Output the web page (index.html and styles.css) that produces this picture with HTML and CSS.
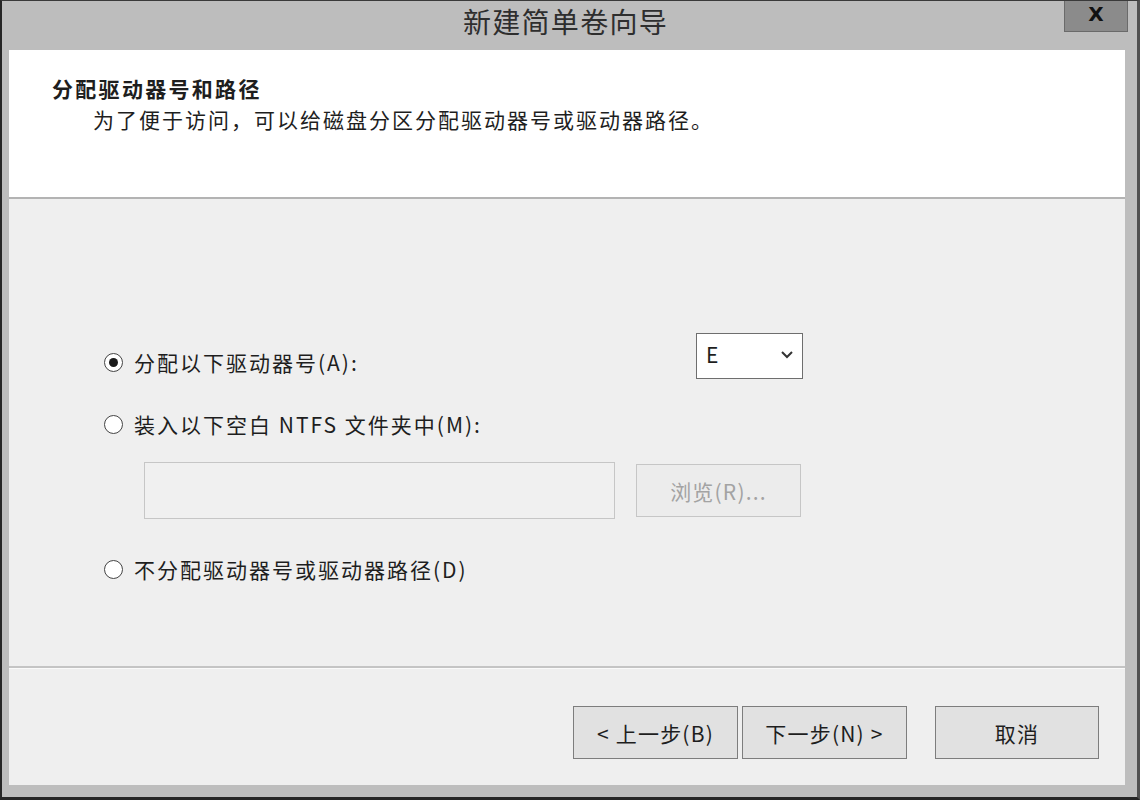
FILE: index.html
```html
<!DOCTYPE html>
<html lang="zh-CN">
<head>
<meta charset="utf-8">
<title>新建简单卷向导</title>
<link rel="stylesheet" href="styles.css">
</head>
<body>
<div class="window">
  <div class="titlebar">
    <div class="tb-spacer"></div>
    <div class="tb-title">新建简单卷向导</div>
    <div class="tb-right"><div class="close">X</div></div>
  </div>
  <div class="client">
    <div class="header">
      <div class="h-title">分配驱动器号和路径</div>
      <div class="h-sub">为了便于访问，可以给磁盘分区分配驱动器号或驱动器路径。</div>
    </div>
    <div class="body">
      <div class="row row1">
        <label class="radio"><span class="circle checked"></span><span class="lbl">分配以下驱动器号(A):</span></label>
        <div class="select"><span>E</span>
          <svg width="14" height="10" viewBox="0 0 14 10"><path d="M2 2 L7 7 L12 2" fill="none" stroke="#333" stroke-width="2"/></svg>
        </div>
      </div>
      <div class="row row2">
        <label class="radio"><span class="circle"></span><span class="lbl">装入以下空白 NTFS 文件夹中(M):</span></label>
      </div>
      <div class="row row-path">
        <div class="path-input"></div>
        <div class="btn disabled browse">浏览(R)...</div>
      </div>
      <div class="row row3">
        <label class="radio"><span class="circle"></span><span class="lbl">不分配驱动器号或驱动器路径(D)</span></label>
      </div>
    </div>
    <div class="footer">
      <div class="btn nav">&lt; 上一步(B)</div>
      <div class="btn nav">下一步(N) &gt;</div>
      <div class="btn nav cancel">取消</div>
    </div>
  </div>
</div>
</body>
</html>
```

FILE: styles.css
```css
html, body {
  margin: 0;
  padding: 0;
}
body {
  font-family: "Noto Sans CJK SC", "Noto Sans", sans-serif;
  color: #1e1e1e;
  background: #1a1a1a;
}
.window {
  width: 1140px;
  height: 800px;
  box-sizing: border-box;
  background: #bdbdbd;
  border-left: 2px solid #262626;
  border-top: 1px solid #3a3a3a;
  border-right: 3px solid #505050;
  border-bottom: 3px solid #262626;
  display: flex;
  flex-direction: column;
}
.titlebar {
  height: 48px;
  display: grid;
  grid-template-columns: 1fr auto 1fr;
  align-items: start;
  padding-right: 8px;
}
.tb-title {
  font-size: 28px;
  line-height: 40px;
  color: #2e2e2e;
  letter-spacing: 1.3px;
}
.tb-right {
  display: flex;
  justify-content: flex-end;
  padding-right: 1px;
}
.close {
  width: 64px;
  height: 31px;
  box-sizing: border-box;
  background: #8b8b8b;
  border: 1px solid #6a6a6a;
  border-top: none;
  color: #111;
  font-family: "DejaVu Sans", sans-serif;
  font-weight: bold;
  font-size: 20px;
  line-height: 26px;
  text-align: center;
}
.client {
  flex: 1;
  margin: 1px 12px 12px 7px;
  display: flex;
  flex-direction: column;
  background: #efefef;
}
.header {
  height: 149px;
  box-sizing: border-box;
  background: #fff;
  border-bottom: 2px solid #b3b3b3;
  padding: 24px 0 0 43px;
}
.h-title {
  font-size: 21px;
  font-weight: bold;
  line-height: 28px;
  letter-spacing: 2.3px;
}
.h-sub {
  font-size: 21px;
  line-height: 30px;
  padding-left: 41px;
  margin-top: 2px;
  letter-spacing: 2px;
}
.body {
  height: 469px;
  box-sizing: border-box;
  border-bottom: 2px solid #c4c4c4;
  padding: 134px 0 0 95px;
}
.row {
  display: flex;
  align-items: flex-start;
}
.row1 .radio {
  width: 592px;
  margin-top: 15px;
}
.radio {
  display: flex;
  align-items: center;
}
.circle {
  width: 19px;
  height: 19px;
  box-sizing: border-box;
  border: 1.5px solid #444;
  border-radius: 50%;
  background: #fff;
  display: flex;
  align-items: center;
  justify-content: center;
  margin-right: 11px;
}
.circle.checked::after {
  content: "";
  width: 9px;
  height: 9px;
  border-radius: 50%;
  background: #1a1a1a;
}
.lbl {
  font-size: 21px;
  line-height: 28px;
  letter-spacing: 2px;
}
.select {
  width: 107px;
  height: 46px;
  box-sizing: border-box;
  border: 1px solid #6e6e6e;
  background: #fff;
  display: flex;
  align-items: flex-start;
  justify-content: space-between;
  padding: 6px 8px 0 9px;
  font-size: 21px;
  line-height: 28px;
}
.select svg {
  margin-top: 10px;
}
.row2 {
  margin-top: 31px;
}
.row-path {
  margin-top: 24px;
  padding-left: 40px;
  align-items: center;
}
.path-input {
  width: 471px;
  height: 57px;
  box-sizing: border-box;
  border: 1px solid #c6c6c6;
  background: #f0f0f0;
}
.btn {
  box-sizing: border-box;
  display: flex;
  align-items: center;
  justify-content: center;
  font-size: 21px;
  letter-spacing: 1.2px;
  height: 53px;
  width: 165px;
  background: #e1e1e1;
  border: 1px solid #7d7d7d;
}
.btn.disabled {
  color: #a3a3a3;
  border-color: #c6c6c6;
  background: #ececec;
  margin-left: 21px;
}
.row3 {
  margin-top: 36px;
}
.footer {
  flex: 1;
  display: flex;
  align-items: flex-start;
  justify-content: flex-end;
  padding: 37px 26px 0 0;
  border-top: 1px solid #fafafa;
}
.nav + .nav {
  margin-left: 4px;
}
.nav.cancel {
  margin-left: 28px;
  width: 164px;
}
```
